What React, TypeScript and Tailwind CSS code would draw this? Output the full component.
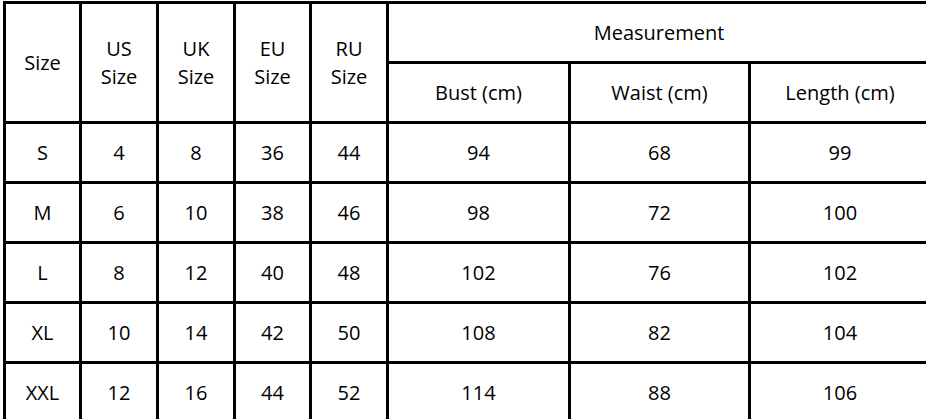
const rows = [
  ["S", "4", "8", "36", "44", "94", "68", "99"],
  ["M", "6", "10", "38", "46", "98", "72", "100"],
  ["L", "8", "12", "40", "48", "102", "76", "102"],
  ["XL", "10", "14", "42", "50", "108", "82", "104"],
  ["XXL", "12", "16", "44", "52", "114", "88", "106"],
];

export default function App() {
  return (
    <div className="w-[926px] h-[419px] overflow-hidden bg-white">
      <div
        className="ml-[3px] mt-[1px] inline-grid grid-cols-[73px_74px_74px_73px_74px_179px_177px_178px] auto-rows-[57px] gap-[3px] p-[3px] bg-black text-[20px] text-black"
        style={{ fontFamily: '"Open Sans", "Liberation Sans", sans-serif' }}
      >
        <div className="row-span-2 flex items-center justify-center bg-white">Size</div>
        {["US", "UK", "EU", "RU"].map((c) => (
          <div key={c} className="row-span-2 flex flex-col items-center justify-center bg-white leading-[28px]">
            <span>{c}</span>
            <span>Size</span>
          </div>
        ))}
        <div className="col-span-3 flex items-center justify-center bg-white">Measurement</div>
        <div className="flex items-center justify-center bg-white">Bust (cm)</div>
        <div className="flex items-center justify-center bg-white">Waist (cm)</div>
        <div className="flex items-center justify-center bg-white">Length (cm)</div>
        {rows.map((r) =>
          r.map((v, i) => (
            <div key={r[0] + i} className="flex items-center justify-center bg-white">
              {v}
            </div>
          ))
        )}
      </div>
    </div>
  );
}
